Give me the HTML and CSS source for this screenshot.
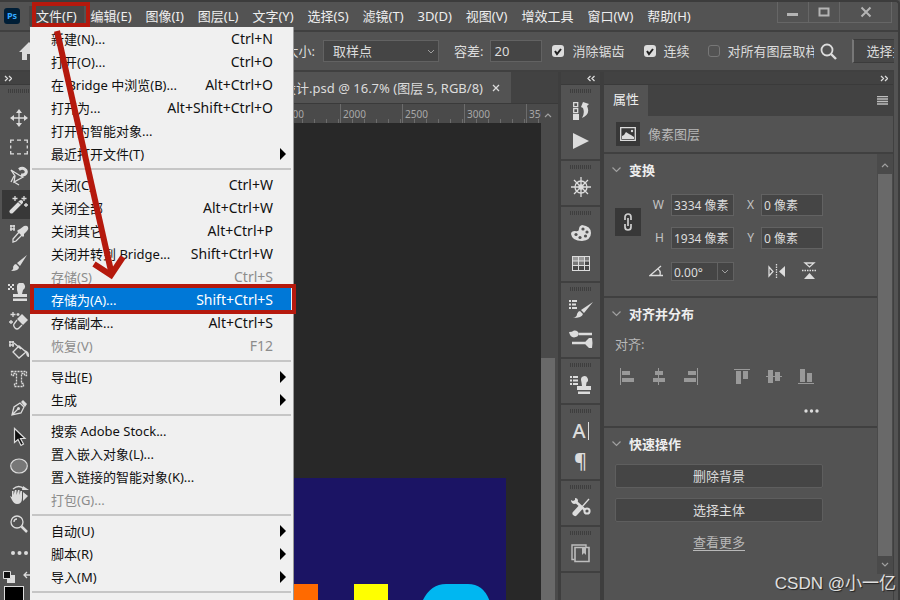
FILE: index.html
```html
<!DOCTYPE html>
<html lang="zh-CN">
<head>
  <meta charset="utf-8">
  <title>Photoshop 存储为</title>
  <link rel="stylesheet" href="styles.css">
</head>
<body>
  <div class="app">
    <header class="menubar">
      <span class="logo">Ps</span>
      <nav class="menus">
        <button class="menu-btn open">文件(F)</button>
        <button class="menu-btn">编辑(E)</button>
        <button class="menu-btn">图像(I)</button>
        <button class="menu-btn">图层(L)</button>
        <button class="menu-btn">文字(Y)</button>
        <button class="menu-btn">选择(S)</button>
        <button class="menu-btn">滤镜(T)</button>
        <button class="menu-btn">3D(D)</button>
        <button class="menu-btn">视图(V)</button>
        <button class="menu-btn">增效工具</button>
        <button class="menu-btn">窗口(W)</button>
        <button class="menu-btn">帮助(H)</button>
      </nav>
      <div class="window-btns">
        <button aria-label="最小化"><svg width="12" height="12"><path d="M0 7h11v3H0z" fill="#b4b4b4"/></svg></button>
        <button aria-label="最大化"><svg width="12" height="12"><path d="M1.500 2.500h9v7h-9z" fill="none" stroke="#b4b4b4" stroke-width="2"/></svg></button>
        <button class="close" aria-label="关闭"><svg width="12" height="12"><path d="M1.500 1.500l9 9M10.500 1.500l-9 9" stroke="#b4b4b4" stroke-width="2"/></svg></button>
      </div>
    </header>

    <div class="options">
      <div class="options-left">
        <svg width="20" height="18" viewBox="0 0 20 18"><path d="M10 0L0 10h3v8h5v-6h4v6h5v-8h3z" fill="#dcdcdc"/></svg>
        <label for="sample">取样大小:</label>
      </div>
      <select id="sample" class="sample"><option>取样点</option></select>
      <label for="tolerance">容差:</label>
      <input id="tolerance" class="tolerance" type="text" value="20">
      <label class="check"><input type="checkbox" checked>消除锯齿</label>
      <label class="check check-2"><input type="checkbox" checked>连续</label>
      <label class="check check-all"><input type="checkbox">对所有图层取样</label>
      <button class="search" aria-label="搜索"><svg width="17" height="17"><circle cx="7" cy="7" r="5.500" fill="none" stroke="#dcdcdc" stroke-width="1.800"/><path d="M11 11l5 5" stroke="#dcdcdc" stroke-width="2.400"/></svg></button>
      <button class="select-mask">选择并遮住...</button>
    </div>

    <main class="workspace">
      <aside class="tools">
        <div class="strip"><svg width="8" height="7"><path d="M1 1l2.500 2.500L1 6M5 1l2.500 2.500L5 6" class="line"/></svg></div>
        <div class="grip"></div>
        <button class="tool" aria-label="移动"><svg width="18" height="18" viewBox="0 0 18 18"><path d="M9 2v14M2 9h14" class="line"/><path d="M9 0l3 4H6zM9 18l3-4H6zM0 9l4-3v6zM18 9l-4-3v6z" class="solid"/></svg></button>
        <button class="tool" aria-label="选框"><svg width="18" height="18" viewBox="0 0 18 18"><path d="M.7 5V2.200H4M7 2.200h4M14 2.200h3.300V5M17.300 7.500v3M17.300 13v2.800H14M11 15.800H7M4 15.800H.7V13M.7 10.500v-3" class="line"/></svg></button>
        <button class="tool" aria-label="套索"><svg width="18" height="20" viewBox="0 0 18 20"><path d="M1 4l8 5 4 2-9 5 1-6zM4 16l5 3M4 10l-3 6" class="line"/><path d="M9 3.500q3-2 5.500-.5t1.500 4-5 2" fill="none" stroke="#dcdcdc" stroke-width="3"/></svg></button>
        <button class="tool active" aria-label="魔棒"><svg width="20" height="18" viewBox="0 0 20 18"><path d="M2.500 15.500L12 6" stroke="#dcdcdc" stroke-width="4" stroke-linecap="round"/><path d="M9.500 6l2.500 2.500" stroke="#383838"/><path d="M6 0v5M3.500 2.500h5M15 0v5M12.500 2.500h5M17 7v4M15 9h4" class="line"/></svg></button>
        <button class="tool" aria-label="吸管"><svg width="20" height="18" viewBox="0 0 20 18"><path d="M1 1h5M1 4h5M2 0v6M5 0v6" class="line"/><path d="M11 6l3 3-7 7-3 1 0-3z" class="line"/><path d="M9 5l2-1 4-3q3-1 4 1t-1 4l-3 3 0 2-1 1-6-6z" class="solid"/></svg></button>
        <button class="tool" aria-label="画笔"><svg width="18" height="18" viewBox="0 0 18 18"><path d="M17 1l-7 11-3-3zM6 10l3 3q0 4-8 4 3-2 2-4 1-3 3-3z" class="solid"/></svg></button>
        <button class="tool" aria-label="图章"><svg width="22" height="18" viewBox="0 0 22 18"><path d="M0 1h2v2H0zM4 1h2v2H4zM2 3h2v2H2zM0 5h2v2H0zM4 5h2v2H4z" class="solid"/><path d="M9 4a4 4 0 1 1 6 3l-1 4h5v3H5v-3h5l-1-4zM5 15.500h14V18H5z" class="solid"/></svg></button>
        <button class="tool" aria-label="橡皮擦"><svg width="20" height="18" viewBox="0 0 20 18"><path d="M4 0v5M1.500 2.500h5M2 8v4M0 10h4M9 1v3M7.500 2.500h3" class="line"/><path d="M13 2l6 6-5 5-6-6z" class="solid"/><path d="M8 8l-3 4q-1 2 1 4t4 0l3-3" class="line"/></svg></button>
        <button class="tool" aria-label="油漆桶"><svg width="22" height="18" viewBox="0 0 22 18"><path d="M1 1h5M1 4h5M2 0v6M5 0v6" class="line"/><path d="M11 5l7 6-7 6-6-6zM6 2l7 6" class="line"/><path d="M17 9q5 2 4 7-3 0-3-5z" class="solid"/></svg></button>
        <button class="tool" aria-label="文字"><svg width="18" height="18" viewBox="0 0 18 18"><path d="M1.500 1.500h15v4h-2v-2h-3v10h2v3h-9v-3h2v-10h-3v2h-2z" class="line" stroke-dasharray="2 1"/></svg></button>
        <button class="tool" aria-label="钢笔"><svg width="18" height="18" viewBox="0 0 18 18"><path d="M2 16l2-8 6-4 4 4-3 6zM2 16l6-6" class="line"/><circle cx="8.500" cy="9.500" r="1.500" class="solid"/><path d="M11 3l2-2 4 4-2 3z" class="solid"/></svg></button>
        <button class="tool" aria-label="路径选择"><svg width="18" height="20" viewBox="0 0 18 20"><path d="M4.500 1.500v14l3.500-3 3 6 2.500-1.500-3-5.500h4.500z" fill="#111" stroke="#dcdcdc" stroke-width="1.200"/></svg></button>
        <button class="tool" aria-label="椭圆"><svg width="18" height="18" viewBox="0 0 18 18"><ellipse cx="9" cy="9" rx="8.300" ry="7" fill="#777" stroke="#dcdcdc" stroke-width="1.200"/></svg></button>
        <button class="tool" aria-label="抓手"><svg width="20" height="20" viewBox="0 0 20 20"><path d="M4 4q6-5 11 0" class="line"/><path d="M14 1l6 4h-7zM14 7l5 4-5 5z" class="solid"/><path d="M1 11l2 1V6h1.500v4L6 5h1.500v5L9 5h1.500v5l1-4H13v7q0 6-5 6-3 0-5-4z" class="solid"/></svg></button>
        <button class="tool" aria-label="缩放"><svg width="18" height="18" viewBox="0 0 18 18"><circle cx="7" cy="7" r="6" class="line"/><path d="M4 7a3 3 0 0 1 3-3" class="line"/><path d="M11.500 11.500l5.500 5.500" stroke="#dcdcdc" stroke-width="2.500"/></svg></button>
        <button class="tool" aria-label="更多工具"><svg width="18" height="6"><circle cx="3" cy="3" r="2" class="solid"/><circle cx="9.500" cy="3" r="2" class="solid"/><circle cx="16" cy="3" r="2" class="solid"/></svg></button>
        <div class="color-reset">
          <svg width="12" height="12"><path d="M4 4h8v8H4z" class="solid"/><path d="M.5.500h7v7h-7z" fill="#111" stroke="#dcdcdc"/></svg>
          <svg width="10" height="12"><path d="M1 4h7v7M4 1L1 4l3 3" class="line"/></svg>
        </div>
        <div class="swatch"></div>
      </aside>

      <section class="document">
        <div class="tabs">
          <div class="tab">设计.psd @ 16.7% (图层 5, RGB/8)<button class="tab-close" aria-label="关闭标签"><svg width="8" height="8"><path d="M1 1l6 6M7 1L1 7" class="line"/></svg></button></div>
        </div>
        <div class="doc-body">
          <div class="view">
            <div class="ruler"><span>0</span><span>500</span><span>1000</span><span>1500</span><span>2000</span><span>2500</span><span>3000</span><span>3500</span></div>
            <div class="canvas">
              <div class="artboard">
                <svg width="216" height="122" viewBox="0 0 216 122">
                  <path d="M0 106h28v16H0z" fill="#ff6a00"/>
                  <path d="M64 106h34v16H64z" fill="#ffff00"/>
                  <path d="M132 124q8-18 24-18h22q16 0 22 18z" fill="#00b7f1"/>
                </svg>
              </div>
            </div>
          </div>
          <div class="scrollbar doc-scroll">
            <svg width="8" height="5"><path d="M1 4l3-3 3 3" class="dim"/></svg>
            <div class="thumb"></div>
          </div>
        </div>
      </section>

      <aside class="dock">
        <div class="strip center"><svg width="8" height="7"><path d="M3.500 1L1 3.500 3.500 6M7.500 1L5 3.500 7.500 6" class="line"/></svg></div>
        <div class="dock-group">
          <button aria-label="历史记录"><svg width="18" height="20" viewBox="0 0 18 20"><path d="M1.700 1.700h4v4h-4zM1.700 7.700h4v4h-4z" class="line"/><path d="M1 13h6v6H1z" class="solid"/><path d="M9 6l2-5 6 2-2 2q4 8-5 12 3-5 1-10z" class="solid"/></svg></button>
          <button aria-label="动作"><svg width="16" height="16"><path d="M0 0l16 8-16 8z" class="solid"/></svg></button>
        </div>
        <div class="dock-group">
          <button aria-label="导航"><svg width="20" height="20" viewBox="0 0 20 20"><circle cx="10" cy="10" r="6" class="line"/><circle cx="10" cy="10" r="2" class="line"/><path d="M10 0v20M0 10h20M3 3l14 14M17 3L3 17" class="line"/></svg></button>
        </div>
        <div class="dock-group">
          <button aria-label="颜色"><svg width="20" height="16" viewBox="0 0 20 16"><path d="M11 0q9 1 9 8t-9 8Q1 16 0 9q0-3 4-3 4 1 4-2t3-4z" class="solid"/><g fill="#535353"><circle cx="12" cy="4" r="1.600"/><circle cx="16" cy="7" r="1.600"/><circle cx="14.500" cy="11" r="1.600"/><circle cx="9" cy="12.500" r="1.600"/><circle cx="5" cy="9.500" r="1.600"/></g></svg></button>
          <button aria-label="色板"><svg width="18" height="15" viewBox="0 0 18 15"><path d="M0 0h18v15H0z" class="solid"/><path d="M1 1h5v3.500H1zM7 1h5v3.500H7z" fill="#9a9a9a"/><path d="M13 1h4v3.500h-4zM1 5.500h5V9H1zM7 5.500h5V9H7z" fill="#777"/><path d="M13 5.500h4V9h-4zM1 10h5v4H1zM7 10h5v4H7zM13 10h4v4h-4z" fill="#484848"/></svg></button>
        </div>
        <div class="dock-group">
          <button aria-label="画笔设置"><svg width="24" height="20" viewBox="0 0 24 20"><path d="M0 1h2v2H0zM3 1h5v2H3zM0 4.500h2v2H0zM3 4.500h4v2H3zM0 8h2v2H0zM3 8h5v2H3z" class="solid"/><path d="M24 3l-9 11-3-3zM11 12l3 3q-1 4-10 4 4-1 4-4 1-3 3-3z" class="solid"/></svg></button>
          <button aria-label="画笔"><svg width="24" height="18" viewBox="0 0 24 18"><path d="M10 4h13M3 13h13" stroke="#dcdcdc" stroke-width="2.500"/><path d="M0 2q3 0 5-1.500 4-.500 5 3.500-1 3-5 3.500Q1 7 0 2zM15 13l5-5h3q1 5 0 10h-3z" class="solid"/></svg></button>
        </div>
        <div class="dock-group">
          <button aria-label="仿制源"><svg width="22" height="20" viewBox="0 0 22 20"><path d="M0 1h2v2H0zM3 1h5v2H3zM0 4.500h2v2H0zM3 4.500h5v2H3zM0 8h2v2H0zM3 8h5v2H3z" class="solid"/><path d="M11 5a3.500 3.500 0 1 1 5.500 2.500L16 11h5v4H7v-4h5l-.5-3.500zM8 16.500h12V19H8z" class="solid"/></svg></button>
        </div>
        <div class="dock-group">
          <button class="glyph char" aria-label="字符">A</button>
          <button class="glyph" aria-label="段落">¶</button>
        </div>
        <div class="dock-group">
          <button aria-label="工具预设"><svg width="20" height="20" viewBox="0 0 20 20"><path d="M4 4l10 9" stroke="#dcdcdc" stroke-width="2.500"/><path d="M0 3l2 1 2-1 0-2q3 0 3 3-1 3-4 3-3-1-3-4z" class="solid"/><circle cx="16" cy="14" r="2.600" fill="none" stroke="#dcdcdc" stroke-width="2"/><path d="M18 2l-8 9" class="line"/><path d="M9 11L4 16.500" stroke="#dcdcdc" stroke-width="5" stroke-linecap="round"/></svg></button>
        </div>
        <div class="dock-group">
          <button aria-label="库"><svg width="19" height="19" viewBox="0 0 19 19"><path d="M3.500 15.500H1V1h14v2" fill="none" stroke="#bdbdbd" stroke-width="1.400"/><path d="M4 3.500h14v14H4z" fill="none" stroke="#bdbdbd" stroke-width="1.600"/><path d="M11 4h4v7l-2-2-2 2z" fill="#bdbdbd"/></svg></button>
        </div>
      </aside>

      <aside class="panel">
        <div class="strip right"><svg width="8" height="7"><path d="M1 1l2.500 2.500L1 6M5 1l2.500 2.500L5 6" class="line"/></svg></div>
        <div class="panel-tabs">
          <span class="panel-tab">属性</span>
          <button class="panel-menu" aria-label="面板菜单"><svg width="11" height="9"><path d="M0 .5h11M0 3h11M0 5.500h11M0 8h11" stroke="#bdbdbd" stroke-width="1.400"/></svg></button>
        </div>
        <div class="layer-type">
          <span class="thumb-icon"><svg width="16" height="14" viewBox="0 0 16 14"><path d="M.7.700h14.600v12.600H.7z" class="line"/><path d="M2 12V9l2-1 2-3 3 2 2 1 3 2v2z" class="solid"/><circle cx="12" cy="4" r="1.200" class="solid"/></svg></span>
          像素图层
        </div>
        <div class="panel-body">
          <div class="sections">
            <section class="section">
              <h2><svg width="9" height="6"><path d="M.5.500l4 4 4-4" class="dim"/></svg>变换</h2>
              <div class="transform">
                <button class="link-btn" aria-label="链接宽高"><svg width="10" height="18" viewBox="0 0 10 18"><path d="M2 7V4a3 3 0 0 1 6 0v3M2 11v3a3 3 0 0 0 6 0v-3M5 5v8" fill="none" stroke="#cfcfcf" stroke-width="1.700"/></svg></button>
                <label for="w">W</label><input id="w" type="text" value="3334 像素">
                <label for="x">X</label><input id="x" type="text" value="0 像素">
                <label for="h">H</label><input id="h" type="text" value="1934 像素">
                <label for="y">Y</label><input id="y" type="text" value="0 像素">
                <label for="angle" class="angle-label" aria-label="角度"><svg width="15" height="12" viewBox="0 0 15 12"><path d="M12 1L1 10.500h13M9 4q3 2 2 6" class="line"/></svg></label>
                <select id="angle"><option>0.00°</option></select>
                <div class="flips">
                  <button aria-label="水平翻转"><svg width="18" height="15" viewBox="0 0 18 15"><path d="M1 3v9l4-4.500z" class="line"/><path d="M17 2v11l-6-5.500z" class="solid"/><path d="M8.500 0v15" class="line" stroke-dasharray="1.500 1"/></svg></button>
                  <button aria-label="垂直翻转"><svg width="15" height="18" viewBox="0 0 15 18"><path d="M3 1h9L7.500 5z" class="line"/><path d="M2 17h11l-5.500-6z" class="solid"/><path d="M0 8.500h15" class="line" stroke-dasharray="1.500 1"/></svg></button>
                </div>
              </div>
            </section>
            <section class="section">
              <h2><svg width="9" height="6"><path d="M.5.500l4 4 4-4" class="dim"/></svg>对齐并分布</h2>
              <p class="align-label">对齐:</p>
              <div class="aligns">
                <div class="align-set">
                  <button aria-label="左对齐"><svg width="16" height="18"><path d="M1 0h1v17H1zM3 3h8v4H3zM3 10h12v4H3z"/></svg></button>
                  <button aria-label="水平居中"><svg width="16" height="18"><path d="M7 0h1v17H7zM4 3h8v4H4zM2 10h12v4H2z"/></svg></button>
                  <button aria-label="右对齐"><svg width="16" height="18"><path d="M14 0h1v17h-1zM5 3h8v4H5zM1 10h12v4H1z"/></svg></button>
                </div>
                <div class="align-set">
                  <button aria-label="顶对齐"><svg width="16" height="18"><path d="M0 1h16v1H0zM2 3h5v13H2zM9 3h5v8H9z"/></svg></button>
                  <button aria-label="垂直居中"><svg width="16" height="18"><path d="M0 8h16v1H0zM2 2h5v13H2zM9 4h5v9H9z"/></svg></button>
                  <button aria-label="底对齐"><svg width="16" height="18"><path d="M0 15h16v1H0zM2 1h5v13H2zM9 5h5v9H9z"/></svg></button>
                </div>
              </div>
              <button class="more" aria-label="更多选项"><svg width="16" height="4"><circle cx="2" cy="2" r="1.700" class="solid"/><circle cx="7.500" cy="2" r="1.700" class="solid"/><circle cx="13" cy="2" r="1.700" class="solid"/></svg></button>
            </section>
            <section class="section">
              <h2><svg width="9" height="6"><path d="M.5.500l4 4 4-4" class="dim"/></svg>快速操作</h2>
              <div class="quick">
                <button>删除背景</button>
                <button>选择主体</button>
                <a href="#">查看更多</a>
              </div>
            </section>
          </div>
          <div class="scrollbar panel-scroll">
            <svg width="8" height="5"><path d="M1 4l3-3 3 3" class="dim"/></svg>
            <div class="thumb"></div>
            <svg width="8" height="5"><path d="M1 1l3 3 3-3" class="dim"/></svg>
          </div>
        </div>
      </aside>
    </main>

    <div class="file-menu">
      <button>新建(N)...<kbd>Ctrl+N</kbd></button>
      <button>打开(O)...<kbd>Ctrl+O</kbd></button>
      <button>在 Bridge 中浏览(B)...<kbd>Alt+Ctrl+O</kbd></button>
      <button>打开为...<kbd>Alt+Shift+Ctrl+O</kbd></button>
      <button>打开为智能对象...</button>
      <button class="sub">最近打开文件(T)</button>
      <hr>
      <button>关闭(C)<kbd>Ctrl+W</kbd></button>
      <button>关闭全部<kbd>Alt+Ctrl+W</kbd></button>
      <button>关闭其它<kbd>Alt+Ctrl+P</kbd></button>
      <button>关闭并转到 Bridge...<kbd>Shift+Ctrl+W</kbd></button>
      <button disabled>存储(S)<kbd>Ctrl+S</kbd></button>
      <button class="selected">存储为(A)...<kbd>Shift+Ctrl+S</kbd></button>
      <button>存储副本...<kbd>Alt+Ctrl+S</kbd></button>
      <button disabled>恢复(V)<kbd>F12</kbd></button>
      <hr>
      <button class="sub">导出(E)</button>
      <button class="sub">生成</button>
      <hr>
      <button>搜索 Adobe Stock...</button>
      <button>置入嵌入对象(L)...</button>
      <button>置入链接的智能对象(K)...</button>
      <button disabled>打包(G)...</button>
      <hr>
      <button class="sub">自动(U)</button>
      <button class="sub">脚本(R)</button>
      <button class="sub">导入(M)</button>
      <hr>
    </div>

    <!-- red boxes and arrow over the menu -->
    <svg class="marks" width="300" height="320">
      <rect x="34" y="4" width="54" height="21"/>
      <rect x="32" y="286" width="262" height="26"/>
      <path d="M57 31l54 240" class="shaft"/>
      <path d="M94 264l17 11 12-18" class="shaft"/>
    </svg>
    <div class="watermark">CSDN @小一亿</div>
  </div>
</body>
</html>
```
FILE: styles.css
```css
* {
  box-sizing: border-box;
}

body {
  margin: 0;
  font: 13px/20px "Noto Sans", "Noto Sans CJK SC", sans-serif;
  color: #dcdcdc;
  background: #535353;
}

button,
input,
select {
  margin: 0;
  padding: 0;
  border: 0;
  background: none;
  color: inherit;
  font: inherit;
}

svg {
  display: block;
  flex: none;
}

.line {
  fill: none;
  stroke: #dcdcdc;
  stroke-width: 1.3;
}

.dim {
  fill: none;
  stroke: #a0a0a0;
  stroke-width: 1.2;
}

.solid {
  fill: #dcdcdc;
}

.app {
  position: relative;
  display: flex;
  flex-direction: column;
  height: 100vh;
  overflow: hidden;
  border-top: 2px solid #3c3c3c;
  border-right: 2px solid #3c3c3c;
  border-top-right-radius: 4px;
  white-space: nowrap;
}

/* menu bar */
.menubar {
  display: flex;
  align-items: center;
  height: 30px;
  padding: 0 6px 0 4px;
  border-bottom: 2px solid #404040;
}

.logo {
  width: 16px;
  height: 16px;
  border-radius: 3px;
  background: #001e36;
  color: #31a8ff;
  font-size: 9px;
  font-weight: bold;
  line-height: 15px;
  text-align: center;
}

.menus {
  display: flex;
  flex: 1;
  margin-left: 9px;
}

.menu-btn {
  padding: 0 7px;
  color: #eee;
}

.menu-btn.open {
  background: #474747;
}

.window-btns {
  display: flex;
  align-self: flex-start;
  border: 1px solid #666;
  border-top: 0;
}

.window-btns button {
  display: flex;
  align-items: center;
  justify-content: center;
  width: 31px;
  height: 20px;
  border-right: 1px solid #666;
}

.window-btns .close {
  width: 51px;
  border: 0;
}

/* options bar */
.options {
  display: flex;
  align-items: center;
  height: 40px;
  margin-right: 4px;
  border-bottom: 2px solid #404040;
  overflow: hidden;
}

.options-left {
  display: flex;
  align-items: center;
  justify-content: space-between;
  width: 315px;
  padding-left: 19px;
}

.options select,
.options input[type="text"] {
  height: 22px;
  border: 1px solid #626262;
  background: #454545;
}

select {
  appearance: none;
}

.options .sample {
  width: 116px;
  margin: 0 15px 0 8px;
  padding-left: 9px;
  background: #454545 url("data:image/svg+xml,%3Csvg xmlns='http://www.w3.org/2000/svg' width='8' height='5'%3E%3Cpath d='M1 1l3 3 3-3' fill='none' stroke='%23a0a0a0'/%3E%3C/svg%3E") no-repeat right 3px center;
}

.options .tolerance {
  width: 52px;
  margin: 0 10px 0 7px;
  padding-left: 3px;
}

.check {
  display: flex;
  align-items: center;
  gap: 8px;
}

.check input {
  appearance: none;
  width: 12px;
  height: 12px;
  border: 1px solid #777;
  border-radius: 3px;
}

.check input:checked {
  border: 0;
  background: #dcdcdc url("data:image/svg+xml,%3Csvg xmlns='http://www.w3.org/2000/svg' width='12' height='12'%3E%3Cpath d='M3 6l2 3 4-5' fill='none' stroke='%23222' stroke-width='2'/%3E%3C/svg%3E");
}

.check-2 {
  margin: 0 18px 0 19px;
}

.check-all {
  width: 106px;
  overflow: hidden;
}

.check-all input {
  flex: none;
}

.search {
  margin: 0 15px 0 6px;
}

.select-mask {
  flex: 1;
  min-width: 0;
  height: 24px;
  padding-left: 13px;
  border: 1px solid #3c3c3c;
  border-left: 2px solid #777;
  border-right: 0;
  background: #474747;
  text-align: left;
  overflow: hidden;
}

/* workspace */
.workspace {
  display: flex;
  flex: 1;
  min-height: 0;
  margin-right: 4px;
}

.strip {
  display: flex;
  align-items: center;
  height: 13px;
  padding: 0 4px;
  border-bottom: 1px solid #3a3a3a;
  background: #424242;
}

.strip.center {
  padding-left: 26px;
}

.strip.right {
  justify-content: flex-end;
  padding-right: 5px;
}

.tools {
  width: 38px;
}

.grip {
  width: 22px;
  height: 4px;
  margin: 4px 8px 10px;
  background: repeating-linear-gradient(90deg, #3e3e3e 0 1px, transparent 1px 2px);
}

.tool {
  display: flex;
  align-items: center;
  justify-content: center;
  width: 34px;
  height: 29px;
  margin-left: 2px;
}

.tool.active {
  background: #383838;
}

.color-reset {
  display: flex;
  gap: 8px;
  padding: 4px 0 0 3px;
}

.swatch {
  width: 20px;
  height: 24px;
  margin: 3px 0 0 4px;
  border: 1px solid #ddd;
  background: #000;
}

/* document */
.document {
  display: flex;
  flex: 1;
  flex-direction: column;
  min-width: 0;
}

.tabs {
  display: flex;
  height: 32px;
  border-bottom: 1px solid #3a3a3a;
  background: #424242;
}

.tab {
  display: flex;
  align-items: center;
  justify-content: flex-end;
  gap: 9px;
  width: 473px;
  padding-right: 11px;
  background: #535353;
}

.doc-body {
  display: flex;
  flex: 1;
}

.view {
  display: flex;
  flex: 1;
  flex-direction: column;
  min-width: 0;
}

.ruler {
  display: flex;
  height: 19px;
  padding-left: 54px;
  overflow: hidden;
  background: #4a4a4a;
  color: #a8a8a8;
  font-size: 10px;
}

.ruler span {
  flex: none;
  width: 62px;
  padding-left: 2px;
  border-left: 1px solid #6c6c6c;
  background: repeating-linear-gradient(90deg, transparent 0 11px, #6c6c6c 11px 12px) bottom / 100% 4px no-repeat;
}

.canvas {
  display: flex;
  flex: 1;
  align-items: flex-end;
  background: #282828;
}

.artboard {
  display: flex;
  flex: 1;
  justify-content: flex-end;
  margin-right: 35px;
  background: #1b1464;
}

.scrollbar {
  display: flex;
  flex-direction: column;
  align-items: center;
  background: #4a4a4a;
}

.scrollbar .thumb {
  flex: 1;
  width: 14px;
  background: #696969;
}

.doc-scroll {
  width: 17px;
  padding: 9px 3px 0 0;
}

.doc-scroll .thumb {
  margin-top: 240px;
}

/* icon dock */
.dock {
  width: 46px;
  border: solid #3e3e3e;
  border-width: 0 4px 0 3px;
}

.dock-group {
  padding-bottom: 3px;
  border-bottom: 2px solid #404040;
}

.dock-group::before {
  content: "";
  display: block;
  width: 22px;
  height: 4px;
  margin: 4px auto 3px;
  background: repeating-linear-gradient(90deg, #3e3e3e 0 1px, transparent 1px 2px);
}

.dock-group button {
  display: flex;
  align-items: center;
  justify-content: center;
  width: 100%;
  height: 30px;
}

.dock-group .glyph {
  font-size: 20px;
  font-weight: 500;
}

/* text cursor beside the letter */
.char::after {
  content: "";
  width: 1px;
  height: 18px;
  margin-left: 2px;
  background: #dcdcdc;
}

/* properties panel */
.panel {
  display: flex;
  flex-direction: column;
  width: 290px;
  border-right: 1px solid #404040;
}

.panel-tabs {
  display: flex;
  align-items: center;
  justify-content: space-between;
  height: 31px;
  padding-right: 5px;
  background: #424242;
}

.panel-tab {
  width: 44px;
  height: 31px;
  padding-top: 4px;
  background: #535353;
  color: #eee;
  text-align: center;
}

.layer-type {
  display: flex;
  align-items: center;
  gap: 8px;
  height: 38px;
  padding-left: 12px;
  border-bottom: 2px solid #404040;
  color: #b8b8b8;
}

.thumb-icon {
  padding: 5px 4px;
  background: #383838;
}

.panel-body {
  display: flex;
  flex: 1;
  align-items: flex-start;
}

.sections {
  flex: 1;
}

.section {
  padding: 6px 8px 0;
  border-bottom: 2px solid #404040;
}

.section:last-child {
  border-bottom: 0;
}

.section h2 {
  display: flex;
  align-items: center;
  gap: 8px;
  margin: 0 0 10px;
  color: #eee;
  font-size: 13px;
  line-height: 20px;
}

.transform {
  display: grid;
  grid-template-columns: 26px 16px 63px 13px 62px;
  grid-auto-rows: 22px;
  gap: 11px 7px;
  align-items: center;
  margin: 14px 3px;
  font-size: 12px;
}

.transform label {
  justify-self: end;
  color: #c4c4c4;
}

.transform input,
.transform select {
  width: 100%;
  height: 22px;
  padding-left: 2px;
  border: 1px solid #626262;
  background: #454545;
}

.transform select {
  height: 19px;
  background: #454545 url("data:image/svg+xml,%3Csvg xmlns='http://www.w3.org/2000/svg' width='16' height='19'%3E%3Cpath d='M.5 0v19' stroke='%23626262'/%3E%3Cpath d='M5 8l3 3 3-3' fill='none' stroke='%23a0a0a0'/%3E%3C/svg%3E") no-repeat right center;
}

.link-btn {
  display: flex;
  grid-row: 1 / 3;
  align-items: center;
  justify-content: center;
  height: 28px;
  background: #383838;
}

.transform .angle-label {
  grid-column: 2;
}

.flips {
  display: flex;
  grid-column: 4 / 6;
  align-items: center;
  justify-content: space-between;
  padding: 0 6px 0 27px;
}

.align-label {
  margin: 0 3px;
  color: #b8b8b8;
}

.aligns {
  display: flex;
  gap: 35px;
  margin: 14px 7px 0;
}

.align-set {
  display: flex;
  gap: 16px;
}

.align-set svg {
  fill: #999;
}

.more {
  display: block;
  margin: 23px 0 13px 192px;
}

.quick {
  display: flex;
  flex-direction: column;
  align-items: center;
  gap: 10px;
  width: 208px;
  margin-left: 3px;
}

.quick button {
  width: 100%;
  height: 24px;
  border: 1px solid #5e5e5e;
  border-radius: 2px;
  background: #454545;
}

.quick a {
  color: #b8b8b8;
  text-underline-offset: 3px;
}

.panel-scroll {
  width: 16px;
  height: 420px;
  padding: 9px 0 7px;
}

.panel-scroll .thumb {
  margin: 6px 0;
}

/* file menu */
.file-menu {
  position: absolute;
  top: 25px;
  left: 30px;
  width: 264px;
  height: 600px;
  padding: 0 2px;
  background: #f0f0f0;
  border-right: 1px solid #999;
  color: #111;
}

.file-menu button {
  display: flex;
  align-items: center;
  justify-content: space-between;
  width: 100%;
  height: 23px;
  padding: 0 18px 0 19px;
}

.file-menu kbd {
  font: 14px/20px "Noto Sans", sans-serif;
}

.file-menu button:disabled {
  color: #8c8c8c;
}

.file-menu .selected {
  background: #0078d7;
  color: #fff;
}

.file-menu .sub {
  padding-right: 5px;
}

.file-menu .sub::after {
  content: "";
  border: solid transparent;
  border-width: 6px 0 6px 6px;
  border-left-color: #000;
}

.file-menu hr {
  height: 2px;
  margin: 3px 0;
  border: 0;
  background: #c6c6c6;
}

.marks {
  position: absolute;
  top: -2px;
  left: 0;
  fill: none;
  stroke: #b5190d;
  stroke-width: 4;
  pointer-events: none;
}

.marks .shaft {
  stroke-width: 6;
}

.watermark {
  position: absolute;
  right: 2px;
  bottom: 4px;
  color: #e0e0e0;
  font: 17px/24px "Liberation Sans", "Noto Sans CJK SC", sans-serif;
  text-shadow: 1px 1px 1px #222;
}
```
